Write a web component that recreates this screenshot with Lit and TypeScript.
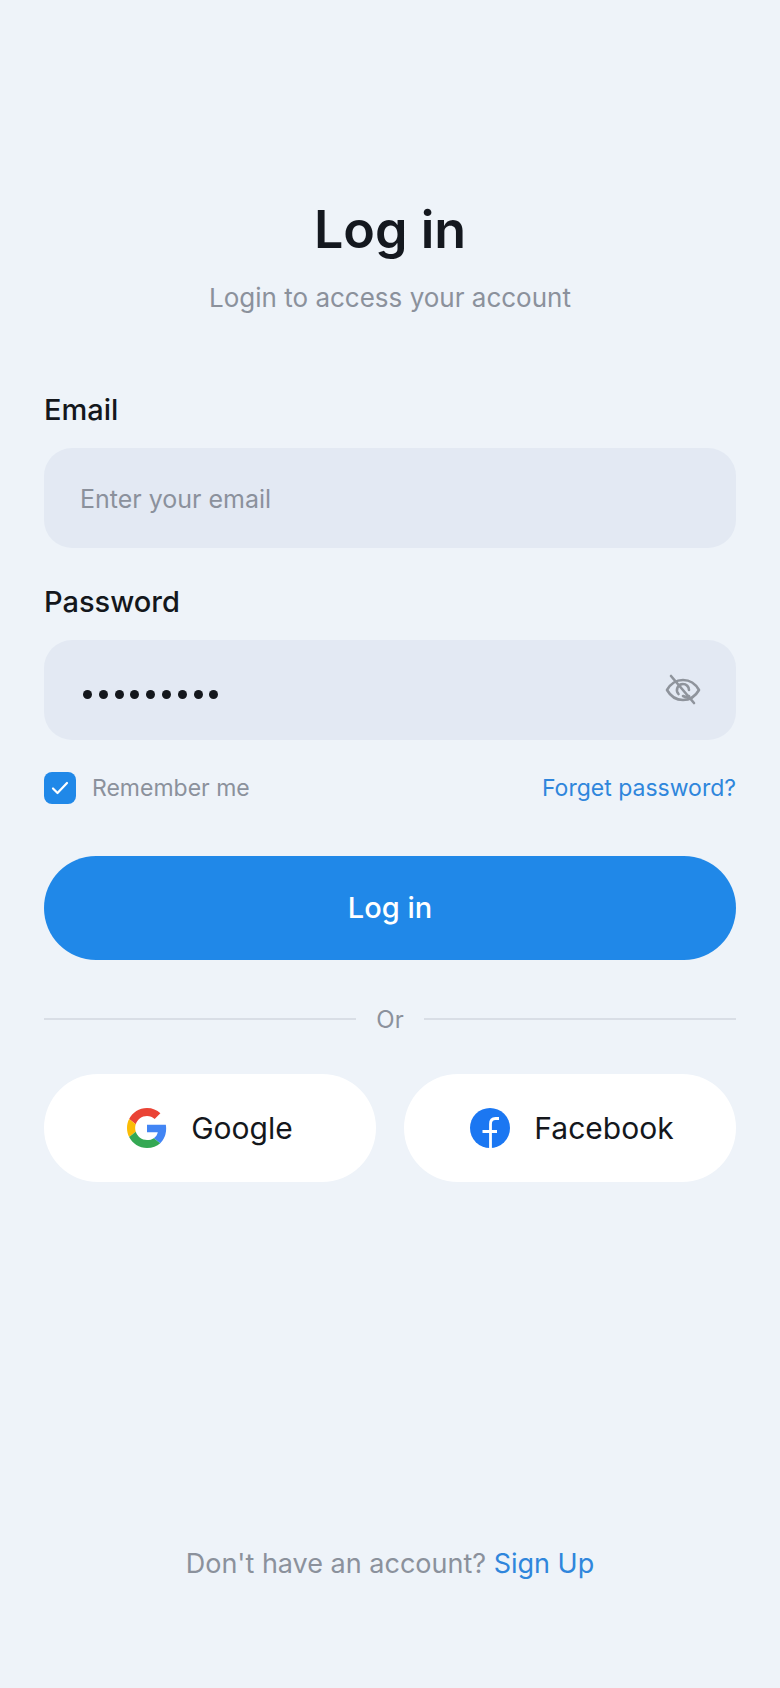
import { LitElement, html, css } from "lit";
import { customElement } from "lit/decorators.js";

@customElement("app-root")
export class AppRoot extends LitElement {
  static styles = css`
    :host {
      display: block;
      width: 780px;
      height: 1688px;
      background: #eef3f9;
      font-family: Inter, "Noto Sans", sans-serif;
      color: #14171c;
    }
    .page {
      box-sizing: border-box;
      height: 1688px;
      padding: 198px 44px 0;
      display: flex;
      flex-direction: column;
    }
    h1 {
      margin: 0;
      font-size: 52px;
      line-height: 64px;
      font-weight: 600;
      text-align: center;
      color: #14181f;
    }
    .sub {
      margin: 18px 0 0;
      font-size: 26px;
      line-height: 36px;
      text-align: center;
      color: #8b919c;
    }
    .label {
      font-size: 29px;
      line-height: 36px;
      font-weight: 500;
      color: #14171c;
    }
    .label.first {
      margin-top: 76px;
    }
    .label.second {
      margin-top: 36px;
    }
    .field {
      margin-top: 20px;
      height: 100px;
      box-sizing: border-box;
      padding: 0 36px;
      border-radius: 28px;
      background: #e3e9f3;
      display: flex;
      align-items: center;
      justify-content: space-between;
      font-size: 25px;
      color: #8b919c;
    }
    .ph {
      margin-top: 2px;
    }
    .dots {
      display: flex;
      gap: 6.8px;
      margin: 8px 0 0 3px;
    }
    .dots i {
      display: block;
      width: 9px;
      height: 9px;
      border-radius: 50%;
      background: #14171c;
    }
    .eye {
      display: block;
      width: 36px;
      height: 32px;
      margin-right: -1px;
    }
    .row {
      margin-top: 32px;
      height: 32px;
      display: flex;
      align-items: center;
      justify-content: space-between;
      font-size: 23px;
    }
    .remember {
      display: flex;
      align-items: center;
      gap: 16px;
      color: #8b919c;
    }
    .check {
      display: flex;
      width: 32px;
      height: 32px;
      border-radius: 8px;
      background: #2088e8;
      align-items: center;
      justify-content: center;
    }
    .link {
      color: #2f86dc;
    }
    .primary {
      margin-top: 52px;
      height: 104px;
      box-sizing: border-box;
      padding-bottom: 2px;
      border-radius: 52px;
      background: #2088e8;
      color: #fff;
      display: flex;
      align-items: center;
      justify-content: center;
      font-size: 29px;
      font-weight: 500;
    }
    .divider {
      margin-top: 44px;
      display: flex;
      align-items: center;
      gap: 20px;
      height: 30px;
      font-size: 24px;
      color: #8b919c;
    }
    .divider span {
      flex: 1;
      height: 2px;
      background: #d9dee6;
    }
    .social {
      margin-top: 40px;
      display: grid;
      grid-template-columns: 1fr 1fr;
      gap: 28px;
    }
    .btn {
      height: 108px;
      box-sizing: border-box;
      border-radius: 54px;
      background: #fff;
      display: flex;
      align-items: center;
      justify-content: center;
      gap: 24px;
      font-size: 30px;
      font-weight: 400;
      color: #14171c;
    }
    .btn.fb {
      padding-left: 4px;
    }
    .btn svg {
      display: block;
      width: 40px;
      height: 40px;
    }
    .footer {
      margin-top: auto;
      margin-bottom: 106px;
      text-align: center;
      font-size: 27px;
      line-height: 36px;
      color: #8b919c;
    }
  `;

  render() {
    return html`
      <div class="page">
        <h1>Log in</h1>
        <p class="sub">Login to access your account</p>
        <div class="label first">Email</div>
        <div class="field"><span class="ph">Enter your email</span></div>
        <div class="label second">Password</div>
        <div class="field">
          <div class="dots">${Array.from({ length: 9 }, () => html`<i></i>`)}</div>
          <svg class="eye" viewBox="0 0 36 32" fill="none" stroke="#8f949c" stroke-width="2.6" stroke-linecap="round" stroke-linejoin="round">
            <path d="M2 16C6 9 11 6 18 6s12 3 16 10c-4 7-9 10-16 10S6 23 2 16Z" />
            <path d="M18 10a6 6 0 0 0-4.500 10M18 10a6 6 0 0 1 6 6M24 22a6 6 0 0 1-6 0" />
            <path d="M6 2l23 27" />
          </svg>
        </div>
        <div class="row">
          <div class="remember">
            <span class="check">
              <svg width="18" height="14" viewBox="0 0 18 14" fill="none" stroke="#fff" stroke-width="2.2" stroke-linecap="round" stroke-linejoin="round"><path d="M2 7.500l4.500 4.500L16 2" /></svg>
            </span>
            Remember me
          </div>
          <div class="link">Forget password?</div>
        </div>
        <div class="primary">Log in</div>
        <div class="divider"><span></span>Or<span></span></div>
        <div class="social">
          <div class="btn">
            <svg viewBox="0 0 48 48">
              <path fill="#EA4335" d="M24 9.500c3.540 0 6.710 1.220 9.210 3.600l6.850-6.850C35.900 2.380 30.470 0 24 0 14.620 0 6.510 5.380 2.560 13.220l7.980 6.190C12.430 13.720 17.740 9.500 24 9.500z" />
              <path fill="#4285F4" d="M46.980 24.550c0-1.570-.15-3.090-.38-4.550H24v9.020h12.940c-.58 2.960-2.260 5.480-4.780 7.180l7.730 6c4.510-4.180 7.090-10.360 7.090-17.650z" />
              <path fill="#FBBC05" d="M10.530 28.590c-.48-1.450-.76-2.990-.76-4.590s.27-3.140.76-4.590l-7.980-6.190C.92 16.460 0 20.120 0 24c0 3.880.92 7.540 2.560 10.780l7.970-6.190z" />
              <path fill="#34A853" d="M24 48c6.480 0 11.930-2.130 15.890-5.810l-7.730-6c-2.150 1.450-4.920 2.300-8.160 2.300-6.260 0-11.570-4.220-13.470-9.910l-7.980 6.190C6.510 42.620 14.620 48 24 48z" />
            </svg>
            Google
          </div>
          <div class="btn fb">
            <svg viewBox="0 0 40 40">
              <circle cx="20" cy="20" r="20" fill="#1b77f2" />
              <path fill="none" stroke="#fff" stroke-width="2.800" d="M20.500 40V16c0-3.500 2-5.500 5-5.500h3.500M12.500 23.500H27" />
            </svg>
            Facebook
          </div>
        </div>
        <div class="footer">Don't have an account? <span class="link">Sign Up</span></div>
      </div>
    `;
  }
}
